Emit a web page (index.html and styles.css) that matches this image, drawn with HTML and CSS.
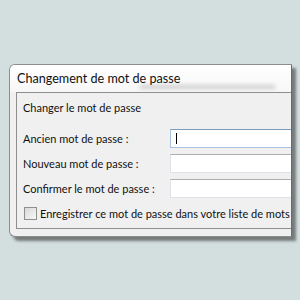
FILE: index.html
```html
<!DOCTYPE html>
<html lang="fr">
<head>
<meta charset="utf-8">
<title>Changement de mot de passe</title>
<link rel="stylesheet" href="styles.css">
</head>
<body>
<div class="stage">
  <div class="window">
    <div class="titlebar">
      <span class="title">Changement de mot de passe</span>
      <span class="ghost"></span>
    </div>
    <div class="panel">
      <div class="heading">Changer le mot de passe</div>
      <div class="form">
        <label class="label">Ancien mot de passe :</label>
        <div class="input focused"><span class="caret"></span></div>
        <label class="label">Nouveau mot de passe :</label>
        <div class="input"></div>
        <label class="label">Confirmer le mot de passe :</label>
        <div class="input"></div>
      </div>
      <div class="check-row">
        <span class="checkbox"></span>
        <span class="check-label">Enregistrer ce mot de passe dans votre liste de mots</span>
      </div>
    </div>
  </div>
</div>
</body>
</html>
```

FILE: styles.css
```css
html, body {
  margin: 0;
  padding: 0;
}
body {
  width: 300px;
  height: 300px;
  overflow: hidden;
  background: #d3dfdf;
  font-family: "Lato", "Open Sans", sans-serif;
  color: #111111;
}
.stage {
  padding: 64px 0 0 9px;
}
.window {
  width: 281px;
  height: 171px;
  background: #f0f0f0;
  border: 1px solid #8c8c8c;
  border-right: 1px solid #6a6a6a;
  border-radius: 6px 0 0 6px;
  box-shadow: 4px 4px 3px rgba(40, 40, 40, 0.55);
  overflow: hidden;
}
.titlebar {
  position: relative;
  height: 27px;
  padding-left: 7px;
  display: flex;
  align-items: center;
  background: linear-gradient(#ffffff, #f7f7f7);
}
.title {
  font-size: 12.6px;
  white-space: nowrap;
  position: relative;
  z-index: 1;
}
.ghost {
  position: absolute;
  left: 130px;
  top: 20px;
  width: 135px;
  height: 4px;
  background: #cdcdcd;
  filter: blur(2px);
}
.panel {
  margin-left: 6px;
  border: 1px solid #8e8e8e;
  border-right: none;
  background: #f0f0f0;
  padding: 7px 0 8px 6px;
  font-size: 11px;
  white-space: nowrap;
}
.heading {
  line-height: 15px;
}
.form {
  margin-top: 14px;
  display: grid;
  grid-template-columns: 147px 140px;
  grid-auto-rows: 19px;
  row-gap: 6px;
  align-items: center;
}
.label {
  line-height: 15px;
}
.input {
  position: relative;
  height: 17px;
  background: #ffffff;
  border: 1px solid #dde2e8;
  border-top-color: #abadb3;
}
.input.focused {
  border-color: #a9c4e0;
  border-top-color: #7f9db9;
}
.caret {
  position: absolute;
  left: 5px;
  top: 3px;
  width: 1px;
  height: 11px;
  background: #000;
}
.check-row {
  margin-top: 9px;
  display: flex;
  align-items: center;
  gap: 3px;
  height: 13px;
}
.checkbox {
  flex: none;
  width: 11px;
  height: 11px;
  margin-left: 1px;
  border: 1px solid #8f8f8f;
  background: linear-gradient(135deg, #d8d8d8, #f8f8f8);
}
.check-label {
  line-height: 13px;
}
```
